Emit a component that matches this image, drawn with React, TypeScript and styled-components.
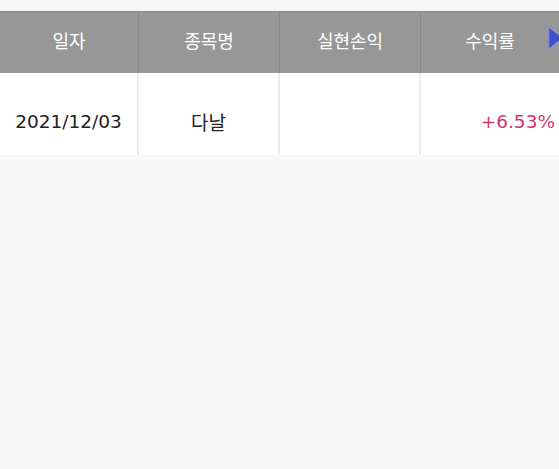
import React from "react";
import styled, { createGlobalStyle } from "styled-components";

const GlobalStyle = createGlobalStyle`
  html, body {
    margin: 0;
    padding: 0;
    background: #f7f7f7;
    font-family: "Noto Sans CJK KR", "Noto Sans", sans-serif;
  }
`;

const columns = ["일자", "종목명", "실현손익", "수익률"];

const rows = [
  { date: "2021/12/03", name: "다날", profit: "", rate: "+6.53%" },
];

const Page = styled.div`
  padding-top: 11px;
  min-height: 469px;
  box-sizing: border-box;
`;

const Table = styled.div`
  position: relative;
  overflow: hidden;
`;

const HeaderRow = styled.div`
  display: grid;
  grid-template-columns: 139px 141px 141px 1fr;
  height: 62px;
  background: #979797;
  border-top: 1px solid #858585;
  box-sizing: border-box;
`;

const HeaderCell = styled.div<{ $last?: boolean }>`
  display: flex;
  align-items: center;
  justify-content: center;
  color: #ffffff;
  font-size: 18px;
  border-right: ${(p) => (p.$last ? "none" : "1px solid #888888")};
  padding-bottom: 6px;
`;

const BodyRow = styled.div`
  display: grid;
  grid-template-columns: 139px 141px 141px 1fr;
  height: 82px;
  background: #ffffff;
`;

const BodyCell = styled.div<{ $last?: boolean; $color?: string; $right?: boolean }>`
  display: flex;
  align-items: center;
  justify-content: ${(p) => (p.$right ? "flex-end" : "center")};
  font-family: "DejaVu Sans", "Noto Sans CJK KR", sans-serif;
  font-size: 18.5px;
  color: ${(p) => p.$color ?? "#222222"};
  border-right: ${(p) => (p.$last ? "none" : "2px solid #ececec")};
  padding-top: 14px;
  padding-right: ${(p) => (p.$right ? "4px" : "0")};
`;

const Name = styled.span`
  font-family: "Noto Sans CJK KR", sans-serif;
  font-size: 19px;
`;

const NextArrow = styled.svg`
  position: absolute;
  right: -6px;
  top: 14px;
`;

export default function App() {
  return (
    <>
      <GlobalStyle />
      <Page>
        <Table>
          <HeaderRow>
            {columns.map((c, i) => (
              <HeaderCell key={c} $last={i === columns.length - 1}>
                {c}
              </HeaderCell>
            ))}
          </HeaderRow>
          {rows.map((r) => (
            <BodyRow key={r.date}>
              <BodyCell>{r.date}</BodyCell>
              <BodyCell>
                <Name>{r.name}</Name>
              </BodyCell>
              <BodyCell>{r.profit}</BodyCell>
              <BodyCell $last $right $color="#d2356b">
                {r.rate}
              </BodyCell>
            </BodyRow>
          ))}
          <NextArrow width="18" height="26" viewBox="0 0 18 26">
            <path d="M1.5 1.5 L16 13 L1.5 24.5 Z" fill="#4250c8" stroke="#8a90c8" strokeWidth="1.5" strokeLinejoin="round" />
          </NextArrow>
        </Table>
      </Page>
    </>
  );
}
